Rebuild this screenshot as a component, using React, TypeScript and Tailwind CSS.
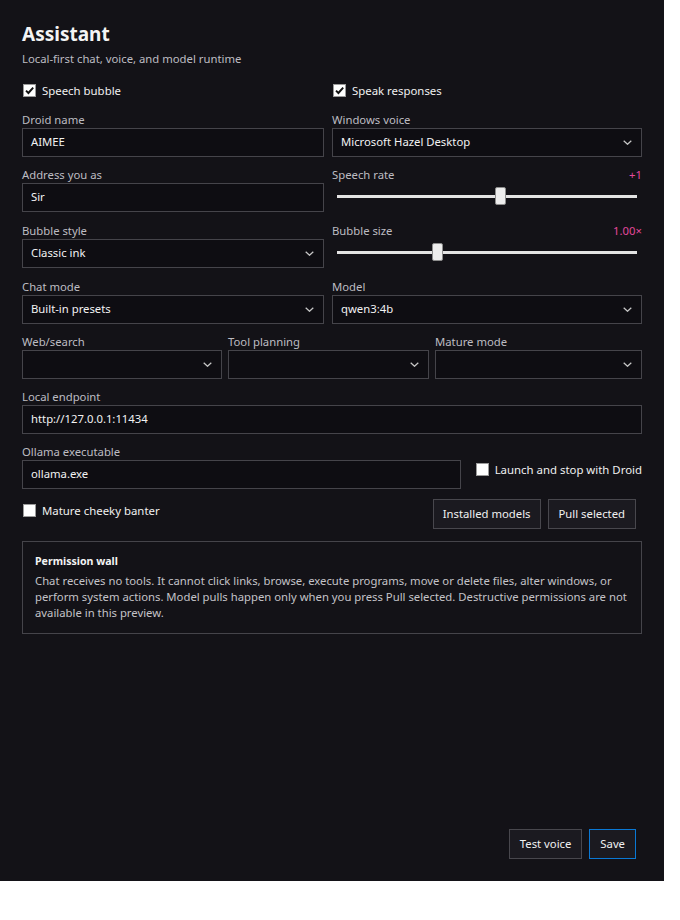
import React from "react";

const font = { fontFamily: '"Noto Sans", "Open Sans", Arial, sans-serif' };

function Check({ checked, label }: { checked?: boolean; label: string }) {
  return (
    <label className="flex items-center gap-[6px] whitespace-nowrap text-[11.4px] text-[#f0f0f0]">
      <span className="flex h-[13px] w-[13px] items-center justify-center border border-[#9a9a9a] bg-white">
        {checked && (
          <svg width="11" height="11" viewBox="0 0 11 11">
            <path d="M2 5.6 L4.4 8 L9.2 2.6" fill="none" stroke="#111" strokeWidth="1.9" />
          </svg>
        )}
      </span>
      <span>{label}</span>
    </label>
  );
}

function Label({ children, value }: { children: React.ReactNode; value?: string }) {
  return (
    <div className="flex h-[16px] items-center justify-between text-[11.3px] leading-[16px] text-[#bdbcc2]">
      <span>{children}</span>
      {value && <span className="text-[#e2489b]">{value}</span>}
    </div>
  );
}

function Input({ value }: { value: string }) {
  return (
    <div className="flex h-[29px] items-center border border-[#45444a] bg-[#0e0d12] px-[8px] text-[11.3px] text-[#f2f2f2]">
      {value}
    </div>
  );
}

function Chevron() {
  return (
    <svg width="9" height="5" viewBox="0 0 9 5" className="shrink-0">
      <path d="M0.7 0.7 L4.5 4.3 L8.3 0.7" fill="none" stroke="#c8c8c8" strokeWidth="1.2" />
    </svg>
  );
}

function Select({ value }: { value?: string }) {
  return (
    <div className="flex h-[29px] items-center justify-between border border-[#45444a] bg-[#0e0d12] pl-[8px] pr-[9px] text-[11.3px] text-[#f2f2f2]">
      <span>{value ?? ""}</span>
      <Chevron />
    </div>
  );
}

function Slider({ pos }: { pos: number }) {
  return (
    <div className="relative h-[29px]">
      <div className="absolute left-[5px] right-[5px] top-[12px] h-[3px] bg-[#e3e3e3]" />
      <div
        className="absolute top-[4px] h-[18px] w-[11px] rounded-[2px] border border-[#8d8d8d] bg-[#ededed]"
        style={{ left: pos }}
      />
    </div>
  );
}

function Field({ label, children, value }: { label: string; children: React.ReactNode; value?: string }) {
  return (
    <div className="flex flex-col">
      <Label value={value}>{label}</Label>
      {children}
    </div>
  );
}

function Button({ children, primary }: { children: React.ReactNode; primary?: boolean }) {
  return (
    <div
      className={
        "flex h-[30px] items-center justify-center border bg-[#1b1a20] px-[10px] text-[11.3px] text-[#f0f0f0] " +
        (primary ? "border-[#0a78d4]" : "border-[#48474d]")
      }
    >
      {children}
    </div>
  );
}

export default function App() {
  return (
    <div className="min-h-[920px] bg-white" style={font}>
      <div className="flex h-[881px] w-[664px] flex-col bg-[#131217] px-[22px] pt-[21px]">
        <h1 className="text-[19px] font-bold leading-[26px] text-[#f4f4f4]">Assistant</h1>
        <p className="mt-[4px] text-[11.3px] leading-[16px] text-[#bdbcc2]">Local-first chat, voice, and model runtime</p>

        <div className="mt-[15px] grid grid-cols-[302px_310px] gap-x-[8px]">
          <div className="pl-[1px]">
            <Check checked label="Speech bubble" />
          </div>
          <div className="pl-[1px]">
            <Check checked label="Speak responses" />
          </div>
        </div>

        <div className="mt-[13px] grid grid-cols-[302px_310px] gap-x-[8px]">
          <Field label="Droid name">
            <Input value="AIMEE" />
          </Field>
          <Field label="Windows voice">
            <Select value="Microsoft Hazel Desktop" />
          </Field>
        </div>

        <div className="mt-[10px] grid grid-cols-[302px_310px] gap-x-[8px]">
          <Field label="Address you as">
            <Input value="Sir" />
          </Field>
          <Field label="Speech rate" value="+1">
            <Slider pos={163} />
          </Field>
        </div>

        <div className="mt-[11px] grid grid-cols-[302px_310px] gap-x-[8px]">
          <Field label="Bubble style">
            <Select value="Classic ink" />
          </Field>
          <Field label="Bubble size" value="1.00×">
            <Slider pos={100} />
          </Field>
        </div>

        <div className="mt-[11px] grid grid-cols-[302px_310px] gap-x-[8px]">
          <Field label="Chat mode">
            <Select value="Built-in presets" />
          </Field>
          <Field label="Model">
            <Select value="qwen3:4b" />
          </Field>
        </div>

        <div className="mt-[10px] grid grid-cols-[200px_201px_207px] gap-x-[6px]">
          <Field label="Web/search">
            <Select />
          </Field>
          <Field label="Tool planning">
            <Select />
          </Field>
          <Field label="Mature mode">
            <Select />
          </Field>
        </div>

        <div className="mt-[10px]">
          <Field label="Local endpoint">
            <Input value="http://127.0.0.1:11434" />
          </Field>
        </div>

        <div className="mt-[10px] flex items-end">
          <div className="w-[440px]">
            <Field label="Ollama executable">
              <Input value="ollama.exe" />
            </Field>
          </div>
          <div className="ml-[15px] flex h-[29px] items-center pb-[11px]">
            <Check label="Launch and stop with Droid" />
          </div>
        </div>

        <div className="mt-[10px] flex items-center justify-between pr-[6px]">
          <div className="pl-[1px] pb-[8px]">
            <Check label="Mature cheeky banter" />
          </div>
          <div className="flex gap-[7px]">
            <div className="flex h-[30px] items-center justify-center border border-[#48474d] bg-[#1b1a20] px-[9px] text-[11.3px] text-[#f0f0f0]">
              Installed models
            </div>
            <Button>Pull selected</Button>
          </div>
        </div>

        <div className="mt-[12px] h-[93px] border border-[#45444a] px-[12px] pt-[10px]">
          <div className="text-[10.6px] font-bold leading-[18px] text-[#f4f4f4]">Permission wall</div>
          <p className="mt-[3px] text-[11.3px] leading-[16px] text-[#c4c3c8]">
            Chat receives no tools. It cannot click links, browse, execute programs, move or delete files, alter windows, or perform system actions. Model pulls happen only when you press Pull selected. Destructive permissions are not available in this preview.
          </p>
        </div>

        <div className="mt-auto mb-[22px] flex justify-end gap-[7px] pr-[6px]">
          <Button>Test voice</Button>
          <Button primary>Save</Button>
        </div>
      </div>
    </div>
  );
}
